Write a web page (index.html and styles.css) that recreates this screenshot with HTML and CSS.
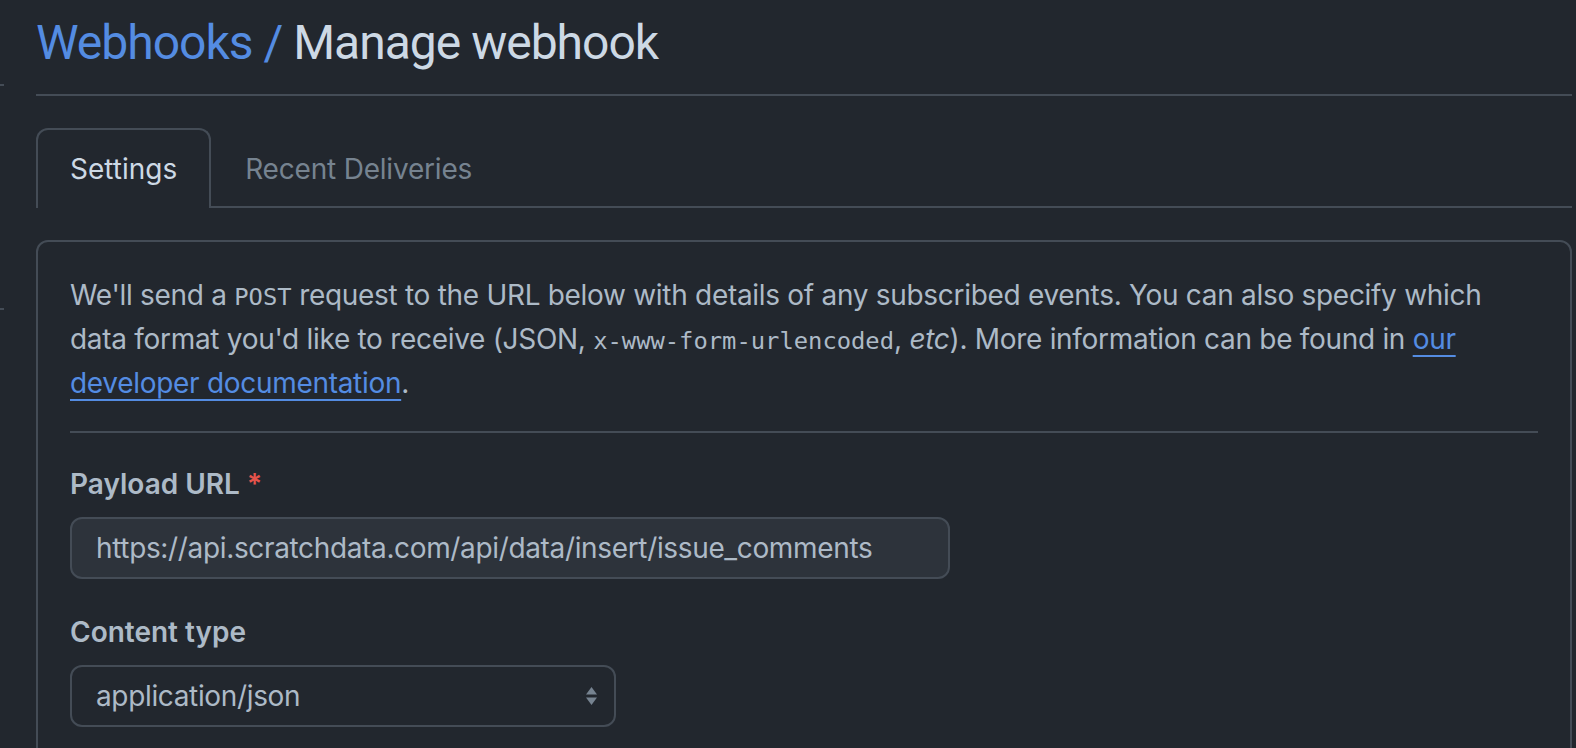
FILE: index.html
```html
<!DOCTYPE html>
<html lang="en">
<head>
<meta charset="utf-8">
<title>Manage webhook</title>
<link rel="stylesheet" href="styles.css">
</head>
<body>
<div class="layout">
  <aside class="sidebar">
    <div class="side-line side-line-1"></div>
    <div class="side-line side-line-2"></div>
  </aside>
  <main class="main">
    <div class="subhead">
      <h2 class="subhead-title"><a class="crumb" href="#">Webhooks</a> <span class="slash">/</span> Manage webhook</h2>
    </div>
    <nav class="tabnav">
      <a class="tab tab-selected" href="#">Settings</a>
      <a class="tab" href="#">Recent Deliveries</a>
    </nav>
    <div class="box">
      <p class="intro">We'll send a <code>POST</code> request to the URL below with details of any subscribed events. You can also specify which<br>data format you'd like to receive (JSON, <code>x-www-form-urlencoded</code>, <em>etc</em>). More information can be found in <a class="link" href="#">our<br>developer documentation</a>.</p>
      <hr class="divider">
      <div class="form-group">
        <label class="label">Payload URL <span class="req">*</span></label>
        <div class="input url-input">https://api.scratchdata.com/api/data/insert/issue_comments</div>
      </div>
      <div class="form-group form-group-2">
        <label class="label">Content type</label>
        <div class="select">
          <span>application/json</span>
          <svg class="select-arrow" width="11" height="20" viewBox="0 0 11 20"><polygon points="0,8.5 5.5,1 11,8.5" fill="#768390"/><polygon points="0,11.5 11,11.5 5.5,19" fill="#768390"/></svg>
        </div>
      </div>
    </div>
  </main>
</div>
</body>
</html>
```

FILE: styles.css
```css
html, body {
  margin: 0;
  padding: 0;
  background: #22272e;
}
body {
  font-family: Inter, "Noto Sans", "Liberation Sans", sans-serif;
  color: #adbac7;
  height: 748px;
  overflow: hidden;
}
.layout {
  display: flex;
  gap: 32px;
  padding-right: 4px;
}
.sidebar {
  width: 4px;
  flex: none;
}
.side-line {
  height: 2px;
  background: #444c56;
}
.side-line-1 { margin-top: 84px; }
.side-line-2 { margin-top: 222px; }
.main {
  flex: 1;
  min-width: 0;
}
.subhead {
  margin-top: 7px;
  padding-bottom: 15px;
  border-bottom: 2px solid #444c56;
}
.subhead-title {
  margin: 0;
  font-family: Roboto, Inter, "Liberation Sans", sans-serif;
  font-size: 48px;
  line-height: 72px;
  font-weight: 400;
  color: #cdd9e5;
  letter-spacing: -1px;
}
.crumb, .slash {
  color: #548ce2;
  text-decoration: none;
}
.tabnav {
  margin-top: 32px;
  display: flex;
  border-bottom: 2px solid #444c56;
}
.tab {
  display: block;
  padding: 18px 32px 16px 32px;
  font-size: 28px;
  line-height: 42px;
  color: #768390;
  text-decoration: none;
  border: 2px solid transparent;
  border-bottom: 0;
  border-radius: 12px 12px 0 0;
  margin-bottom: -2px;
  letter-spacing: -0.2px;
}
.tab-selected {
  color: #cdd9e5;
  border-color: #444c56;
  background: #22272e;
  padding-bottom: 18px;
  letter-spacing: 0;
}
.box {
  margin-top: 32px;
  border: 2px solid #444c56;
  border-radius: 12px;
  padding: 32px 32px 40px;
}
.intro {
  margin: 0;
  font-size: 28px;
  line-height: 42px;
  letter-spacing: -0.3px;
}
.intro code {
  font-family: "DejaVu Sans Mono", "Liberation Mono", monospace;
  font-size: 23.8px;
  letter-spacing: 0;
}
.link {
  color: #548ce2;
  text-decoration: underline;
  text-underline-offset: 6px;
  text-decoration-thickness: 2px;
}
.divider {
  margin: 27px 0 0;
  border: 0;
  height: 2px;
  background: #444c56;
}
.form-group {
  margin-top: 30px;
}
.form-group-2 {
  margin-top: 32px;
}
.label {
  display: block;
  font-size: 28px;
  line-height: 42px;
  font-weight: 600;
  color: #adbac7;
}
.req {
  color: #e5534b;
}
.input {
  margin-top: 12px;
  box-sizing: border-box;
  width: 880px;
  height: 62px;
  border: 2px solid #444c56;
  border-radius: 12px;
  background: #2d333b;
  padding: 0 24px;
  font-size: 28px;
  line-height: 58px;
  color: #adbac7;
  letter-spacing: -0.35px;
}
.select {
  margin-top: 12px;
  box-sizing: border-box;
  width: 546px;
  height: 62px;
  border: 2px solid #444c56;
  border-radius: 12px;
  background: #22272e;
  padding: 0 17px 0 24px;
  font-size: 28px;
  line-height: 58px;
  color: #adbac7;
  letter-spacing: -0.35px;
  display: flex;
  align-items: center;
  justify-content: space-between;
}
.select-arrow {
  display: block;
}
```
